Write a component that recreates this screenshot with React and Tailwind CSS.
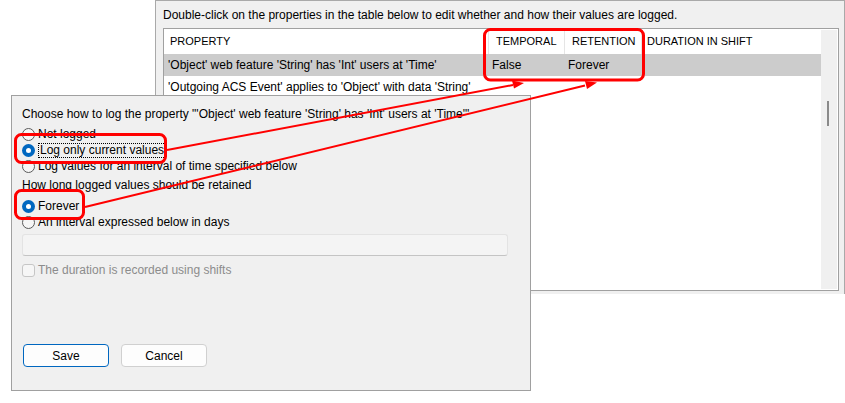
import React from "react";

const font = { fontFamily: '"Liberation Sans", Arial, sans-serif' };

function Radio({ checked, label, focus }) {
  return (
    <div className="flex items-center h-[16px]">
      {checked ? (
        <span className="w-[13px] h-[13px] rounded-full bg-[#0067c0] flex items-center justify-center shrink-0">
          <span className="w-[5px] h-[5px] rounded-full bg-white" />
        </span>
      ) : (
        <span className="w-[13px] h-[13px] rounded-full border border-[#5a5a5a] bg-[#f6f6f6] shrink-0" />
      )}
      <span
        className={
          "ml-[3px] leading-[13px] " +
          (focus ? "border border-dotted border-black px-px -ml-px" : "")
        }
      >
        {label}
      </span>
    </div>
  );
}

function Annotations() {
  return (
    <svg
      className="absolute inset-0 pointer-events-none"
      width="845"
      height="403"
      viewBox="0 0 845 403"
    >
      <g fill="none" stroke="#ff0000" strokeWidth="3">
        <rect x="484.5" y="29.5" width="159" height="50.5" rx="6" />
        <rect x="15.5" y="134.5" width="150" height="28" rx="6" />
        <rect x="15.5" y="190.5" width="68" height="28" rx="6" />
      </g>
      <g stroke="#ff0000" strokeWidth="2">
        <line x1="167" y1="150" x2="513" y2="85" />
        <line x1="85" y1="207" x2="585" y2="85.5" />
      </g>
      <g fill="#ff0000">
        <polygon points="524,83 512,80.5 514,88.5" />
        <polygon points="597,82.5 585,81 587,89" />
      </g>
    </svg>
  );
}

export default function App() {
  return (
    <div
      className="relative w-[845px] h-[403px] bg-white overflow-hidden text-[12px] text-black"
      style={font}
    >
      {/* properties window */}
      <div className="absolute left-[155px] top-0 w-[690px] h-[294px] bg-[#f0f0f0] border-t border-l border-r border-[#a9a9a9] pl-[7px] flex flex-col">
        <div className="h-[27px] flex items-center">
          Double-click on the properties in the table below to edit whether and how their values are logged.
        </div>
        <div className="w-[676px] h-[263px] border border-[#a0a0a0] bg-white flex">
          <div className="flex-1 flex flex-col">
            <div className="h-[25px] flex items-stretch text-[11px]">
              <div className="w-[324px] pl-[6px] flex items-center">PROPERTY</div>
              <div className="w-[76px] pl-[7px] flex items-center border-l border-[#e5e5e5]">TEMPORAL</div>
              <div className="w-[78px] pl-[7px] flex items-center border-l border-[#e5e5e5] border-r">RETENTION</div>
              <div className="flex-1 pl-[5px] flex items-center">DURATION IN SHIFT</div>
            </div>
            <div className="h-[22px] flex items-center bg-[#cccccc]">
              <div className="w-[324px] pl-[4px]">'Object' web feature 'String' has 'Int' users at 'Time'</div>
              <div className="w-[76px] pl-[4px]">False</div>
              <div className="w-[78px] pl-[4px]">Forever</div>
            </div>
            <div className="h-[22px] flex items-center">
              <div className="pl-[4px]">'Outgoing ACS Event' applies to 'Object' with data 'String'</div>
            </div>
          </div>
          <div className="w-[16px] my-px mr-px bg-[#f0f0f0] relative">
            <div className="absolute left-[6px] top-[71px] w-[2px] h-[25px] bg-[#8a8a8a]" />
          </div>
        </div>
      </div>

      {/* logging dialog */}
      <div className="absolute left-[11px] top-[95px] w-[520px] h-[296px] bg-[#f0f0f0] border border-[#a0a0a0] pl-[10px] pt-[10px] flex flex-col">
        <div className="h-[16px] flex items-center">
          Choose how to log the property "'Object' web feature 'String' has 'Int' users at 'Time'"
        </div>
        <div className="mt-[4px] flex flex-col">
          <Radio label="Not logged" />
          <Radio checked focus label="Log only current values" />
          <Radio label="Log values for an interval of time specified below" />
        </div>
        <div className="mt-[3px] h-[16px] flex items-center">How long logged values should be retained</div>
        <div className="mt-[5px] flex flex-col">
          <Radio checked label="Forever" />
          <Radio label="An interval expressed below in days" />
        </div>
        <div className="mt-[4px] w-[486px] h-[22px] rounded-[3px] border border-[#e3e3e3] border-b-[#c4c4c4] bg-[#f4f4f4]" />
        <div className="mt-[6px] h-[16px] flex items-center text-[#8c8c8c]">
          <span className="w-[13px] h-[13px] rounded-[3px] border border-[#c6c6c6] bg-[#f6f6f6] mr-[3px]" />
          The duration is recorded using shifts
        </div>
        <div className="mt-[66px] flex gap-[12px] pl-px">
          <button className="w-[86px] h-[23px] rounded-[4px] border border-[#0067c0] bg-[#fdfdfd] flex items-center justify-center">
            Save
          </button>
          <button className="w-[86px] h-[23px] rounded-[4px] border border-[#d0d0d0] bg-[#fdfdfd] flex items-center justify-center">
            Cancel
          </button>
        </div>
      </div>

      <Annotations />
    </div>
  );
}
